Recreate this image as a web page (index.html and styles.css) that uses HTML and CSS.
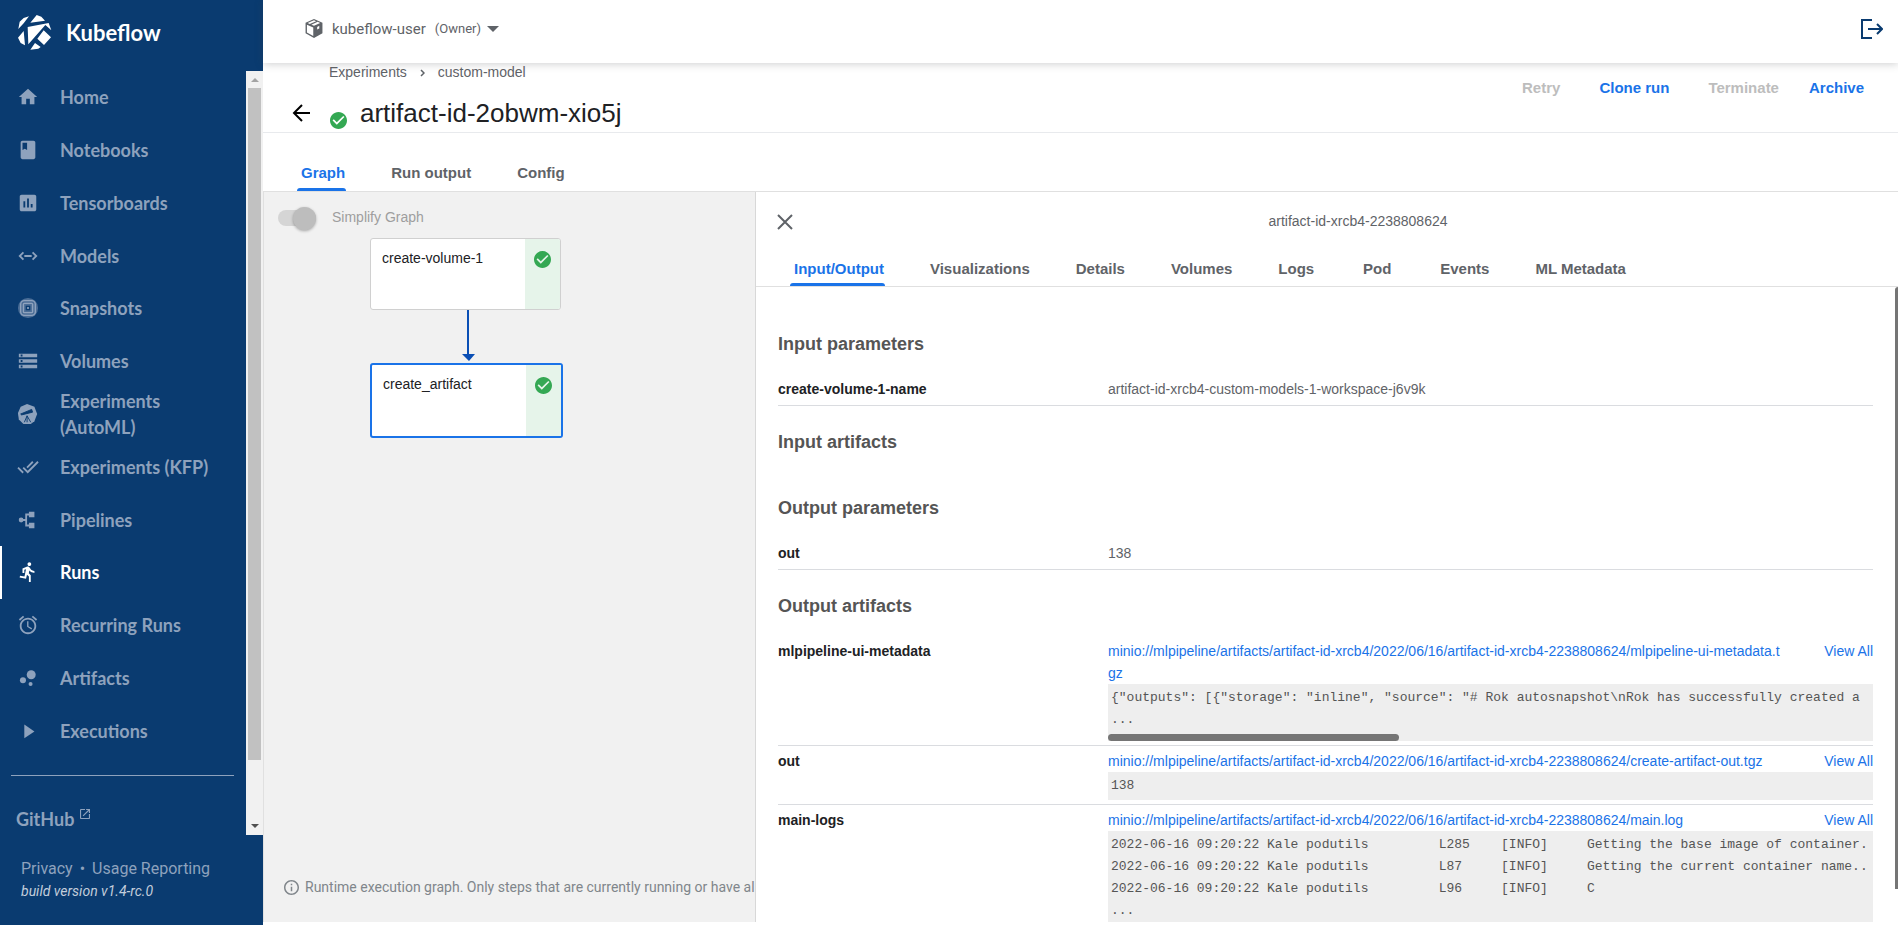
FILE: index.html
```html
<!DOCTYPE html>
<html lang="en">
<head>
<meta charset="utf-8">
<title>Kubeflow - artifact-id-2obwm-xio5j</title>
<link rel="stylesheet" href="styles.css">
</head>
<body>
<svg class="defs" aria-hidden="true">
  <symbol id="check" viewBox="2 2 20 20"><path d="M12 2C6.480 2 2 6.480 2 12s4.480 10 10 10 10-4.480 10-10S17.520 2 12 2zm-2 15l-5-5 1.410-1.410L10 14.170l7.590-7.590L19 8l-9 9z"/></symbol>
</svg>
<div class="app">
  <aside class="sidebar">
    <a class="brand" href="#">
      <svg class="brand-logo" viewBox="0 0 102 105"><path d="M1 42L5 20 17 9 33 4 17 25zM56 0L70 5 81 17 37 23zM29 36L92 24 100 46 82 30 31 88zM77 46L99 67 78 90 58 71zM17 48L21 91 8 84 0 68zM51 84L68 96 61 101 37 104z"/></svg>
      <span>Kubeflow</span>
    </a>
    <div class="side-body">
      <div class="side-scroll">
        <nav class="nav">
          <a class="nav-item" href="#"><svg viewBox="0 0 24 24"><path d="M10 20v-6h4v6h5v-8h3L12 3 2 12h3v8z"/></svg>Home</a>
          <a class="nav-item" href="#"><svg viewBox="0 0 24 24"><path d="M18 2H6c-1.100 0-2 .9-2 2v16c0 1.100.9 2 2 2h12c1.100 0 2-.9 2-2V4c0-1.100-.9-2-2-2zM6 4h5v8l-2.500-1.500L6 12V4z"/></svg>Notebooks</a>
          <a class="nav-item" href="#"><svg viewBox="0 0 24 24"><path d="M19 3H5c-1.100 0-2 .9-2 2v14c0 1.100.9 2 2 2h14c1.100 0 2-.9 2-2V5c0-1.100-.9-2-2-2zM9 17H7v-7h2v7zm4 0h-2V7h2v10zm4 0h-2v-4h2v4z"/></svg>Tensorboards</a>
          <a class="nav-item" href="#"><svg viewBox="0 0 24 24"><path d="M7 8l-4 4 4 4M17 8l4 4-4 4M8 12h8" fill="none" stroke="currentColor" stroke-width="2"/></svg>Models</a>
          <a class="nav-item" href="#"><svg viewBox="0 0 24 24"><circle cx="12" cy="12" r="11" opacity=".5"/><g fill="none" stroke="currentColor" stroke-width="1.500"><rect x="4" y="4" width="16" height="16" rx="4"/><rect x="7" y="7" width="10" height="10" rx="1"/></g><rect class="cut" x="10" y="10" width="4" height="4"/><rect x="11" y="11" width="2" height="2"/></svg>Snapshots</a>
          <a class="nav-item" href="#"><svg viewBox="0 0 24 24"><path d="M2 20h20v-4H2v4zm2-3h2v2H4v-2zM2 4v4h20V4H2zm4 3H4V5h2v2zm-4 7h20v-4H2v4zm2-3h2v2H4v-2z"/></svg>Volumes</a>
          <a class="nav-item" href="#"><svg viewBox="0 0 24 24"><path d="M11 1l8 3 3 8-3 8-4 3H7l-5-5-1-7 3-7z"/><path class="cut" d="M4 12l12-5 1 3-12 3zM11 14l-3 7M11 14v7M11 14l4 7"/></svg>Experiments (AutoML)</a>
          <a class="nav-item" href="#"><svg viewBox="0 0 24 24"><path d="M18 7l-1.410-1.410-6.340 6.340 1.410 1.410L18 7zm4.240-1.410L11.660 16.170 7.480 12l-1.410 1.410L11.660 19l12-12-1.420-1.410zM.41 13.410L6 19l1.410-1.410L1.830 12 .41 13.410z"/></svg>Experiments (KFP)</a>
          <a class="nav-item" href="#"><svg viewBox="0 0 24 24"><circle cx="4.500" cy="12" r="2.600"/><path d="M13 3h6v6h-6zM13 15h6v6h-6z"/><path d="M5 12h5M14 6h-4v12h4" fill="none" stroke="currentColor" stroke-width="2"/></svg>Pipelines</a>
          <a class="nav-item active" href="#" aria-current="page"><svg viewBox="0 0 24 24"><path d="M13.490 5.480c1.100 0 2-.9 2-2s-.9-2-2-2-2 .9-2 2 .9 2 2 2zm-3.600 13.900l1-4.400 2.100 2v6h2v-7.500l-2.100-2 .6-3c1.300 1.500 3.300 2.500 5.500 2.500v-2c-1.900 0-3.500-1-4.300-2.400l-1-1.600c-.4-.6-1-1-1.700-1-.3 0-.5.1-.8.1l-5.200 2.200v4.700h2v-3.400l1.800-.7-1.600 8.100-4.900-1-.4 2 7 1.400z"/></svg>Runs</a>
          <a class="nav-item" href="#"><svg viewBox="0 0 24 24"><path d="M22 5.720l-4.600-3.860-1.290 1.530 4.600 3.860L22 5.720zM7.880 3.390L6.600 1.860 2 5.710l1.290 1.530 4.590-3.850zM12.500 8H11v6l4.750 2.850.75-1.230-4-2.370V8zM12 4c-4.970 0-9 4.030-9 9s4.020 9 9 9c4.970 0 9-4.030 9-9s-4.030-9-9-9zm0 16c-3.870 0-7-3.130-7-7s3.130-7 7-7 7 3.130 7 7-3.130 7-7 7z"/></svg>Recurring Runs</a>
          <a class="nav-item" href="#"><svg viewBox="0 0 24 24"><circle cx="6.500" cy="14.500" r="3.300"/><circle cx="14.800" cy="18.500" r="2.200"/><circle cx="15.500" cy="8.500" r="4.900"/></svg>Artifacts</a>
          <a class="nav-item" href="#"><svg viewBox="0 0 24 24"><path d="M8 5v15l11-7.500z"/></svg>Executions</a>
        </nav>
        <hr class="side-rule">
        <a class="github" href="#">GitHub <svg viewBox="3 3 18 18"><path d="M19 19H5V5h7V3H5c-1.110 0-2 .9-2 2v14c0 1.100.89 2 2 2h14c1.100 0 2-.9 2-2v-7h-2v7zM14 3v2h3.590l-9.830 9.830 1.410 1.410L19 6.410V10h2V3h-7z"/></svg></a>
      </div>
      <div class="side-bar" aria-hidden="true">
        <svg class="bar-arrow up" viewBox="0 0 8 4"><path d="M0 4l4-4 4 4z"/></svg>
        <div class="bar-thumb"></div>
        <svg class="bar-arrow" viewBox="0 0 8 4"><path d="M0 0l4 4 4-4z"/></svg>
      </div>
    </div>
    <footer class="side-foot">
      <p class="legal"><a href="#">Privacy</a><span class="dot">•</span><a href="#">Usage Reporting</a></p>
      <p class="build">build version v1.4-rc.0</p>
    </footer>
  </aside>

  <div class="main">
    <header class="topbar">
      <button class="namespace" type="button">
        <svg class="cube" viewBox="0 0 18 18"><path d="M9 0l8 3.500v10L9 18l-8-4.500v-10z"/><path class="face" d="M2.300 5.500L8.300 8v8L2.300 12.800zM9 1.200l2 .9-6 2.600-2-1zM12.500 2.700l2.400 1L9 6.500 6.500 5.400z"/><path class="face" d="M12 7.500l2-1v2.500l-2 1z"/></svg>
        <span class="ns-name">kubeflow-user</span><span class="ns-role">(Owner)</span>
        <svg class="caret" viewBox="0 0 10 5"><path d="M0 0h10L5 5z"/></svg>
      </button>
      <a class="logout" href="#" aria-label="Log out"><svg viewBox="0 0 22 20"><path d="M11 1H1v18h10M7 10h14M16 5l5 5-5 5" fill="none" stroke="currentColor" stroke-width="2"/></svg></a>
    </header>

    <div class="page-head">
      <div class="head-left">
        <nav class="crumbs"><a href="#">Experiments</a><svg viewBox="0 0 5 8"><path d="M1 1l3 3-3 3" fill="none" stroke="currentColor" stroke-width="1.500"/></svg><a href="#">custom-model</a></nav>
        <div class="title-row">
          <button class="back" type="button" aria-label="Back"><svg viewBox="0 0 18 18"><path d="M18 9H2M10 1L2 9l8 8" fill="none" stroke="currentColor" stroke-width="2"/></svg></button>
          <svg class="check"><use href="#check"/></svg>
          <h1>artifact-id-2obwm-xio5j</h1>
        </div>
      </div>
      <div class="actions">
        <button type="button" disabled>Retry</button>
        <button type="button">Clone run</button>
        <button type="button" disabled>Terminate</button>
        <button type="button">Archive</button>
      </div>
    </div>

    <div class="tabs page-tabs">
      <button class="tab selected" type="button">Graph</button>
      <button class="tab" type="button">Run output</button>
      <button class="tab" type="button">Config</button>
    </div>

    <div class="split">
      <section class="graph">
        <label class="simplify"><input type="checkbox" role="switch" checked disabled><span>Simplify Graph</span></label>
        <div class="flow">
          <div class="node"><span class="node-name">create-volume-1</span><span class="node-state"><svg class="check"><use href="#check"/></svg></span></div>
          <svg class="edge" viewBox="0 0 13 53"><path d="M5 0h2v45H5zM0 44h13l-6 7z"/></svg>
          <div class="node current"><span class="node-name">create_artifact</span><span class="node-state"><svg class="check"><use href="#check"/></svg></span></div>
        </div>
        <p class="hint"><svg viewBox="2 2 20 20"><path d="M11 17h2v-6h-2v6zm1-15C6.480 2 2 6.480 2 12s4.480 10 10 10 10-4.480 10-10S17.520 2 12 2zm0 18c-4.410 0-8-3.590-8-8s3.590-8 8-8 8 3.590 8 8-3.590 8-8 8zM11 9h2V7h-2v2z"/></svg><span>Runtime execution graph. Only steps that are currently running or have al</span></p>
      </section>

      <section class="panel">
        <div class="panel-head">
          <button class="close" type="button" aria-label="Close"><svg viewBox="0 0 16 16"><path d="M1 1l14 14M15 1L1 15" fill="none" stroke="currentColor" stroke-width="2"/></svg></button>
          <h2>artifact-id-xrcb4-2238808624</h2>
        </div>
        <div class="tabs panel-tabs">
          <button class="tab selected" type="button">Input/Output</button>
          <button class="tab" type="button">Visualizations</button>
          <button class="tab" type="button">Details</button>
          <button class="tab" type="button">Volumes</button>
          <button class="tab" type="button">Logs</button>
          <button class="tab" type="button">Pod</button>
          <button class="tab" type="button">Events</button>
          <button class="tab" type="button">ML Metadata</button>
        </div>
        <div class="panel-body">
          <div class="details">
            <h3>Input parameters</h3>
            <dl class="row"><dt>create-volume-1-name</dt><dd>artifact-id-xrcb4-custom-models-1-workspace-j6v9k</dd></dl>
            <h3>Input artifacts</h3>
            <div class="empty"></div>
            <h3>Output parameters</h3>
            <dl class="row"><dt>out</dt><dd>138</dd></dl>
            <h3>Output artifacts</h3>
            <dl class="row artifact">
              <dt>mlpipeline-ui-metadata</dt>
              <dd>
                <div class="links"><a class="uri" href="#">minio://mlpipeline/artifacts/artifact-id-xrcb4/2022/06/16/artifact-id-xrcb4-2238808624/mlpipeline-ui-metadata.tgz</a><a href="#">View All</a></div>
                <div class="preview"><pre>{"outputs": [{"storage": "inline", "source": "# Rok autosnapshot\nRok has successfully created a
...</pre><div class="h-thumb"></div></div>
              </dd>
            </dl>
            <dl class="row artifact">
              <dt>out</dt>
              <dd>
                <div class="links"><a class="uri" href="#">minio://mlpipeline/artifacts/artifact-id-xrcb4/2022/06/16/artifact-id-xrcb4-2238808624/create-artifact-out.tgz</a><a href="#">View All</a></div>
                <div class="preview"><pre>138</pre></div>
              </dd>
            </dl>
            <dl class="row artifact">
              <dt>main-logs</dt>
              <dd>
                <div class="links"><a class="uri" href="#">minio://mlpipeline/artifacts/artifact-id-xrcb4/2022/06/16/artifact-id-xrcb4-2238808624/main.log</a><a href="#">View All</a></div>
                <div class="preview"><pre>2022-06-16 09:20:22 Kale podutils         L285    [INFO]     Getting the base image of container.
2022-06-16 09:20:22 Kale podutils         L87     [INFO]     Getting the current container name..
2022-06-16 09:20:22 Kale podutils         L96     [INFO]     C
...</pre></div>
              </dd>
            </dl>
          </div>
          <div class="v-thumb"></div>
        </div>
      </section>
    </div>
  </div>
</div>
</body>
</html>
```
FILE: styles.css
```css
* { box-sizing: border-box; }
body, h1, h2, h3, p, dl, dd, pre { margin: 0; }
body { font-family: "Liberation Sans", Arial, sans-serif; font-size: 14px; color: #5f6368; background: #fff; }
button { font: inherit; color: inherit; background: none; border: 0; padding: 0; cursor: pointer; }
a { color: inherit; text-decoration: none; }
svg { display: block; fill: currentColor; flex: none; }
.defs { position: absolute; width: 0; height: 0; }
.app { display: flex; height: 100vh; overflow: hidden; }

/* sidebar */
.sidebar { width: 263px; flex: none; display: flex; flex-direction: column; background: #0a3b70; color: #8ea2bd; }
.brand { height: 71px; flex: none; display: flex; align-items: center; gap: 14px; padding: 0 18px 6px; color: #fff; font: 700 22px/28px Lato, sans-serif; }
.brand-logo { width: 34px; height: 35px; }
.side-body { flex: 1; min-height: 0; display: flex; }
.side-scroll { flex: 1; min-width: 0; overflow: hidden; font-family: Lato, sans-serif; font-size: 18px; font-weight: 700; }
.nav { height: 686px; display: flex; flex-direction: column; }
.nav-item { flex: 1 1 0; display: flex; align-items: center; gap: 21px; padding: 0 32px 0 15px; border-left: 2px solid transparent; line-height: 26px; }
.nav-item svg { width: 22px; height: 22px; }
.nav-item.active { color: #fff; border-color: #fff; }
.cut { fill: #0a3b70; stroke: #0a3b70; stroke-width: 1; }
.side-rule { margin: 18px 12px 0 11px; border: 0; border-top: 1px solid #8ea2bd; }
.github { display: flex; gap: 6px; padding: 30px 16px 0; line-height: 26px; }
.github svg { width: 10px; height: 10px; margin-top: 3px; }
.side-bar { width: 17px; display: flex; flex-direction: column; align-items: center; background: #f1f1f1; }
.bar-arrow { width: 8px; height: 4px; margin: auto 0 7px; color: #505050; }
.bar-arrow.up { margin: 7px 0 6px; color: #a3a3a3; }
.bar-thumb { width: 13px; height: 88%; background: #c1c1c1; }
.side-foot { height: 90px; padding: 23px 21px 0; font-family: Roboto, sans-serif; line-height: 22px; }
.legal { display: flex; gap: 7px; font-size: 16px; }
.build { color: #c2cddb; font-style: italic; font-size: 14px; }

/* top bar */
.main { flex: 1; min-width: 0; display: flex; flex-direction: column; padding-bottom: 3px; }
.topbar { position: relative; z-index: 1; height: 63px; flex: none; display: flex; align-items: center; justify-content: space-between; padding: 0 15px 6px 41px; background: #fff; box-shadow: 0 1px 8px rgba(60, 64, 67, .25); }
.namespace { display: flex; align-items: center; font-family: Roboto, sans-serif; font-size: 15px; }
.cube { width: 20px; height: 19px; margin-right: 8px; }
.face { fill: #fff; }
.ns-role { font-size: 13px; margin: 0 6px 0 9px; }
.caret { width: 12px; height: 6px; }
.logout { color: #0a3b70; }
.logout svg { width: 22px; height: 20px; }

/* run header */
.page-head { height: 70px; flex: none; display: flex; justify-content: space-between; padding: 0 34px 0 29px; border-bottom: 1px solid #e8eaed; }
.crumbs { display: flex; align-items: center; gap: 13px; padding-left: 37px; line-height: 19px; }
.crumbs svg { width: 5px; height: 8px; }
.title-row { display: flex; align-items: center; padding-top: 15px; line-height: 32px; }
.back { color: #000; margin-right: 20px; }
.back svg { width: 18px; height: 18px; }
.check { width: 17px; height: 17px; color: #34a853; }
.title-row .check { margin: 14px 13px 0 0; }
h1 { font-size: 26px; font-weight: 400; color: #202124; }
.actions { display: flex; align-items: flex-start; padding-top: 16px; }
.actions button { margin-left: 39px; font-size: 15px; font-weight: 700; line-height: 18px; color: #1a73e8; }
.actions button:last-child { margin-left: 30px; }
.actions button:disabled { color: #bdbdbd; cursor: default; }

/* tabs */
.tabs { flex: none; display: flex; gap: 38px; border-bottom: 1px solid #e0e0e0; }
.tab { min-width: 42px; display: flex; flex-direction: column; justify-content: flex-end; padding: 0 4px; font-size: 15px; font-weight: 700; line-height: 18px; }
.tab::after { content: ""; height: 3px; margin: 6px -1px 0 -4px; border-radius: 3px 3px 0 0; }
.tab.selected { color: #1a73e8; }
.tab.selected::after { background: #1a73e8; }
.page-tabs { height: 59px; padding-left: 34px; }
.panel-tabs { height: 38px; padding-left: 34px; }
.panel-tabs .tab::after { margin-top: 5px; }

/* graph */
.split { flex: 1; min-height: 0; display: flex; border-left: 1px solid #e0e0e0; }
.graph { flex: 0 0 492px; min-width: 0; display: flex; flex-direction: column; background: #f1f1f1; border-right: 1px solid #d8d8d8; overflow: hidden; }
.simplify { display: flex; align-items: center; gap: 16px; height: 46px; padding: 6px 14px 0; color: #9e9e9e; }
.simplify input { appearance: none; width: 38px; height: 16px; margin: 0; border-radius: 8px; background: #d5d5d5; display: flex; align-items: center; justify-content: flex-end; }
.simplify input::before { content: ""; width: 23px; height: 23px; border-radius: 50%; background: #bdbdbd; box-shadow: 0 1px 3px rgba(0, 0, 0, .3); }
.simplify span { line-height: 16px; margin-bottom: 2px; }
.flow { align-self: flex-start; margin-left: 106px; display: flex; flex-direction: column; align-items: flex-start; color: #202124; }
.node { width: 191px; height: 72px; display: flex; background: #fff; border: 1px solid #d0d0d0; border-radius: 3px; overflow: hidden; }
.node-name { flex: 1; padding: 10px 11px 0; line-height: 18px; }
.node-state { width: 35px; padding: 12px 9px; background: #e6f4ea; }
.edge { width: 13px; height: 53px; margin-left: 92px; color: #0a4fb5; }
.node.current { width: 193px; height: 75px; border: 2px solid #1a73e8; }
.hint { display: flex; align-items: center; gap: 6px; margin-top: auto; padding: 0 0 26px 20px; font-family: Roboto, sans-serif; line-height: 18px; color: #80868b; white-space: nowrap; }
.hint svg { width: 15px; height: 15px; }

/* details panel */
.panel { flex: 1; min-width: 0; display: flex; flex-direction: column; }
.panel-head { height: 57px; flex: none; display: flex; align-items: center; }
.close { width: 62px; padding: 2px 0 0 21px; }
.close svg { width: 16px; height: 16px; }
h2 { flex: 1; text-align: center; font-size: 14px; font-weight: 400; }
.panel-body { flex: 1; min-height: 0; display: flex; }
.details { flex: 1; min-width: 0; overflow: hidden; padding: 43px 22px 0; }
.v-thumb { width: 3px; height: 602px; background: #757575; border-radius: 3px 0 0 0; }
h3 { font-size: 18px; line-height: 28px; color: #555; }
.row + h3 { margin-top: 22px; }
.empty { height: 38px; }
.row { display: flex; border-bottom: 1px solid #dadce0; line-height: 22px; padding-bottom: 5px; }
h3 + .row { margin-top: 20px; }
dt { width: 330px; flex: none; color: #202124; font-weight: 700; }
dd { flex: 1; min-width: 0; }
.artifact { padding-bottom: 4px; }
.artifact + .artifact { padding-top: 4px; }
.links { display: flex; justify-content: space-between; color: #1a73e8; }
.uri { width: 678px; word-break: break-all; }
.preview { background: #eee; overflow: hidden; }
pre { padding: 3px; font: 13px/22px "Liberation Mono", monospace; color: #555; }
.h-thumb { width: 38%; height: 7px; border-radius: 4px; background: #757575; }
```
